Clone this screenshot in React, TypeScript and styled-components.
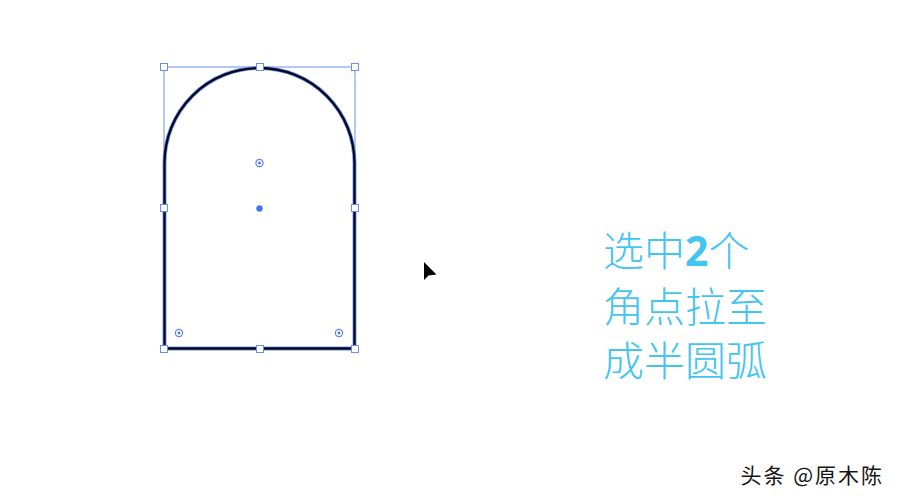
import styled, { createGlobalStyle } from "styled-components"

const GlobalStyle = createGlobalStyle`
  html, body {
    margin: 0;
    padding: 0;
    background: #ffffff;
  }
`

const Page = styled.div`
  width: 898px;
  height: 502px;
  background: #ffffff;
  display: flex;
  flex-direction: column;
  overflow: hidden;
`

const Stage = styled.div`
  flex: 1;
  display: flex;
  align-items: flex-start;
  padding: 62px 0 0 158px;
`

const Artboard = styled.svg`
  display: block;
  flex-shrink: 0;
`

const Cursor = styled.svg`
  display: block;
  flex-shrink: 0;
  margin: 197px 0 0 59px;
`

const Caption = styled.div`
  margin: 159px 0 0 164px;
  font-family: "Noto Sans CJK SC", "Noto Sans", sans-serif;
  font-size: 41px;
  font-weight: 300;
  line-height: 54px;
  color: #43c4f1;
`

const Strong = styled.span`
  font-family: "Noto Sans", "Noto Sans CJK SC", sans-serif;
  font-weight: 700;
`

const Footer = styled.div`
  display: flex;
  justify-content: flex-end;
  padding: 0 14px 16px 0;
`

const Watermark = styled.span`
  font-family: "Noto Sans CJK SC", sans-serif;
  font-size: 21px;
  font-weight: 400;
  letter-spacing: 2px;
  line-height: 24px;
  color: #151515;
  text-shadow: 0 0 2px #ffffff;
`

const BLUE = "#6a8ff2"

const handles = [
  [164, 67],
  [260, 67],
  [355, 67],
  [164, 208],
  [355, 208],
  [164, 349],
  [260, 349],
  [355, 349],
]

const targets = [
  [259.5, 163],
  [179, 333],
  [339, 333],
]

const outline = "M164.5 163 A95 95 0 0 1 354.5 163 L354.5 348.5 L164.5 348.5 Z"

function Shape() {
  return (
    <Artboard width={204} height={292} viewBox="158 62 204 292">
      <rect x={164} y={67} width={191} height={282} fill="none" stroke={BLUE} strokeWidth={1} />
      <path d={outline} fill="none" stroke="#7696f2" strokeWidth={4} />
      <path d={outline} fill="none" stroke="#04081f" strokeWidth={2.3} />
      {targets.map(([x, y], i) => (
        <g key={i}>
          <circle cx={x} cy={y} r={3.6} fill="#ffffff" stroke="#5b84ee" strokeWidth={1.2} />
          <circle cx={x} cy={y} r={1.4} fill="#4a78ec" />
        </g>
      ))}
      <circle cx={259.5} cy={208.5} r={3.2} fill="#3f78ee" />
      {handles.map(([x, y], i) => (
        <rect key={i} x={x - 3.5} y={y - 3.5} width={7} height={7} fill="#ffffff" stroke={BLUE} strokeWidth={1} />
      ))}
    </Artboard>
  )
}

export default function App() {
  return (
    <Page>
      <GlobalStyle />
      <Stage>
        <Shape />
        <Cursor width={18} height={24} viewBox="0 0 18 24">
          <path d="M3 3 L3 21 L7.5 16.5 L15.5 15.5 Z" fill="#000000" />
        </Cursor>
        <Caption>
          <div>
            选中<Strong>2</Strong>个
          </div>
          <div>角点拉至</div>
          <div>成半圆弧</div>
        </Caption>
      </Stage>
      <Footer>
        <Watermark>头条 @原木陈</Watermark>
      </Footer>
    </Page>
  )
}
